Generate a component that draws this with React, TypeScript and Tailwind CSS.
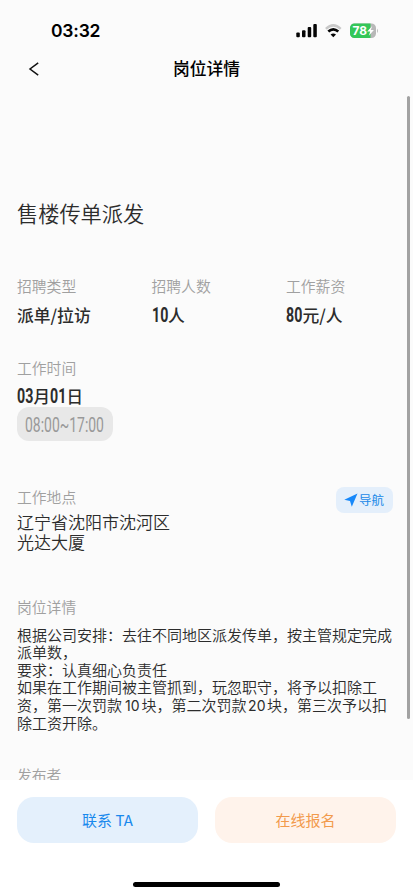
import type { ReactNode } from "react";

function Label({ children }: { children: ReactNode }) {
  return <div className="h-5 text-[14.8px] leading-5 font-[350] text-[#a0a0a0]">{children}</div>;
}

function Num({ children }: { children: string }) {
  return (
    <span className="inline-block w-[16.5px] shrink-0 font-['Roboto',sans-serif] text-[20px] leading-5 font-bold">
      <span className="inline-block origin-left scale-x-[.71]">{children}</span>
    </span>
  );
}

function StatusBar() {
  return (
    <div className="flex h-[47px] items-center pt-[15px] pl-[51px]">
      <span className="w-[245px] font-['Inter',sans-serif] text-[17.5px] leading-8 font-semibold tracking-[-0.2px] text-black">03:32</span>
      <svg width="84" height="18" viewBox="0 0 84 18">
        <g fill="#050505">
          <rect x="0.3" y="10.5" width="3.5" height="4.7" rx="1" />
          <rect x="6" y="8.2" width="3.5" height="7" rx="1" />
          <rect x="11.7" y="5" width="3.5" height="10.2" rx="1" />
          <rect x="17.3" y="2" width="3.5" height="13.2" rx="1" />
        </g>
        <path d="M29.9 6.8Q37.3 0 44.7 6.8" fill="none" stroke="#c9c9c9" strokeWidth="2.5" />
        <path d="M32.3 9.6Q37.3 5.2 42.3 9.6" fill="none" stroke="#050505" strokeWidth="2.7" />
        <path d="M34.6 12.6Q37.3 10.2 40 12.6L37.3 15.3Z" fill="#050505" />
        <clipPath id="battery"><rect x="54" y="1.5" width="26" height="14.5" rx="4.5" /></clipPath>
        <g clipPath="url(#battery)">
          <rect x="54" y="1" width="26" height="16" fill="#b8b8b8" />
          <rect x="54" y="1" width="20.5" height="16" fill="#34c759" />
        </g>
        <path d="M81 6.5q1.9 2.3 0 4.6z" fill="#b8b8b8" />
        <text x="56.5" y="13.2" fontSize="12" fontWeight="700" fill="white" fontFamily="Inter, sans-serif" textLength="14.5" lengthAdjust="spacingAndGlyphs">78</text>
        <path d="M76.2 4.1L71.2 9.6H74.2L72.8 13.7L77.9 8H74.8Z" fill="white" />
      </svg>
    </div>
  );
}

export default function App() {
  return (
    <div className="relative flex h-[896px] w-[413px] flex-col overflow-hidden bg-[#fbfbfb] font-['Noto_Sans_CJK_SC',sans-serif] text-[#2c2c2c]">
      <StatusBar />
      <header className="flex h-[42px] shrink-0 items-center pl-[28px]">
        <svg width="12" height="14" viewBox="0 0 12 14" className="mt-0.5" fill="none" stroke="#111" strokeWidth="1.5">
          <path d="M10.2 .8L2 7L10.2 13.2" />
        </svg>
        <h1 className="ml-[133px] text-[16.8px] leading-6 font-medium text-black">岗位详情</h1>
      </header>

      <main className="flex h-[691px] shrink-0 flex-col overflow-hidden px-[17px] pt-[109px]">
        <h2 className="h-[30px] text-[21.2px] leading-[30px] font-[350]">售楼传单派发</h2>

        <div className="mt-[48px] grid grid-cols-[134.5px_134.5px_1fr]">
          <div>
            <Label>招聘类型</Label>
            <div className="mt-[9px] h-5 text-[16.8px] leading-5 font-medium">派单/拉访</div>
          </div>
          <div>
            <Label>招聘人数</Label>
            <div className="mt-[9px] flex h-5 items-baseline text-[16.8px] leading-5 font-medium">
              <Num>10</Num>人
            </div>
          </div>
          <div>
            <Label>工作薪资</Label>
            <div className="mt-[9px] flex h-5 items-baseline text-[16.8px] leading-5 font-medium">
              <Num>80</Num>元/人
            </div>
          </div>
        </div>

        <div className="mt-[33px]">
          <Label>工作时间</Label>
          <div className="mt-[8px] flex h-5 items-baseline text-[16.5px] leading-5 font-medium">
            <Num>03</Num>月<Num>01</Num>日
          </div>
          <div className="mt-[1px] h-[34px] w-[96px] rounded-[12px] bg-[#e8e8e8] pt-[3px] pl-2 font-['Roboto',sans-serif] text-[19.5px] leading-8 whitespace-nowrap text-[#999]">
            <span className="inline-block origin-left scale-x-[.715]">08:00~17:00</span>
          </div>
        </div>

        <div className="mt-[46px] flex justify-between">
          <div>
            <Label>工作地点</Label>
            <p className="mt-[5px] text-[17px] leading-5 font-[350]">辽宁省沈阳市沈河区<br />光达大厦</p>
          </div>
          <button className="mr-[3px] flex h-[26px] w-[57px] items-center rounded-[8px] bg-[#e4effb] pl-2 text-[12.5px] text-[#1989e8]">
            <svg width="14" height="14" viewBox="0 0 14 14" className="mr-[1px]"><path d="M13.5.5L.3 6.7L6 8.1L7.8 13.7Z" fill="#1688fa" /></svg>
            导航
          </button>
        </div>

        <div className="mt-[45px]">
          <Label>岗位详情</Label>
          <div className="mt-[8.5px] w-[385px] text-[15px] leading-[17.5px] font-[350] whitespace-nowrap">
            <p>根据公司安排：去往不同地区派发传单，按主管规定完成</p>
            <p>派单数，</p>
            <p>要求：认真细心负责任</p>
            <p>如果在工作期间被主管抓到，玩忽职守，将予以扣除工</p>
            <p>资，第一次罚款<span className="inline-block w-[19.5px] pl-[1px] text-center font-['Inter'] text-[14px] font-normal">10</span>块，第二次罚款<span className="inline-block w-[20.5px] text-center font-['Inter'] text-[14px] font-normal">20</span>块，第三次予以扣</p>
            <p>除工资开除。</p>
          </div>
        </div>

        <div className="mt-[33px]"><Label>发布者</Label></div>
      </main>

      <footer className="flex h-[116px] shrink-0 flex-col items-center bg-white pt-[17px]">
        <div className="flex w-full gap-[17px] px-[17px]">
          <button className="h-[46px] flex-1 rounded-[17px] bg-[#e4f0fc] text-[15px] text-[#1989ed]">联系 TA</button>
          <button className="h-[46px] flex-1 rounded-[17px] bg-[#fff3eb] text-[15px] text-[#f29a4c]">在线报名</button>
        </div>
        <div className="mt-[39px] h-[5px] w-[147px] rounded-full bg-black" />
      </footer>
      <div className="absolute top-[96px] right-[3px] h-[623px] w-[3px] rounded-full bg-[#a2a2a2]" />
    </div>
  );
}
